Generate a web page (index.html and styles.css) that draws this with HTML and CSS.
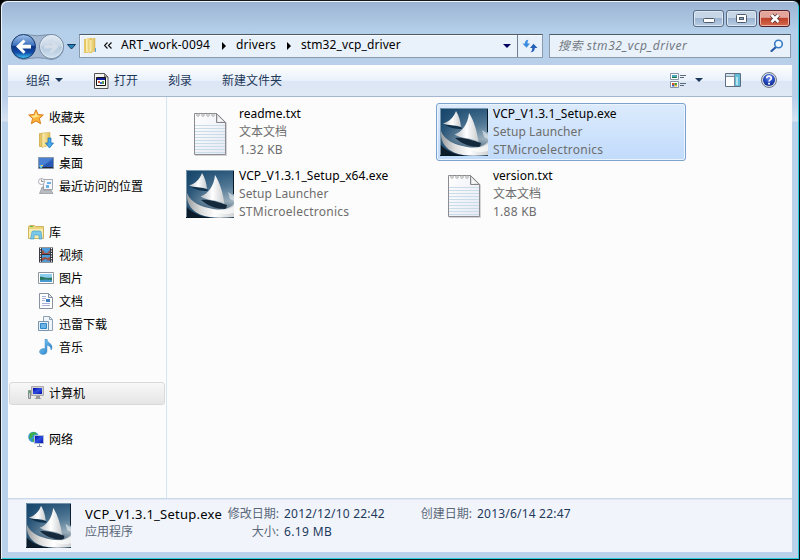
FILE: index.html
```html
<!DOCTYPE html>
<html lang="zh-CN">
<head>
<meta charset="utf-8">
<title>stm32_vcp_driver</title>
<link rel="stylesheet" href="styles.css">
</head>
<body>
<svg class="defs" width="0" height="0" aria-hidden="true">
  <defs>
    <linearGradient id="sea" x1="0" y1="0" x2="0" y2="1"><stop offset="0" stop-color="#2a577b"/><stop offset=".35" stop-color="#587e9a"/><stop offset=".65" stop-color="#a3b5c1"/><stop offset="1" stop-color="#1a3a54"/></linearGradient>
    <linearGradient id="seaLeft" x1="0" y1="0" x2="1" y2="0"><stop offset="0" stop-color="#0f3f66" stop-opacity=".8"/><stop offset=".5" stop-color="#0f3f66" stop-opacity=".25"/><stop offset="1" stop-color="#0f3f66" stop-opacity="0"/></linearGradient>
    <linearGradient id="sail" x1="0" y1="0" x2="1" y2="0"><stop offset="0" stop-color="#b4bcc2"/><stop offset=".5" stop-color="#fff"/><stop offset="1" stop-color="#c9cccf"/></linearGradient>
    <linearGradient id="hull" x1="0" y1="0" x2="1" y2="0"><stop offset="0" stop-color="#9a9ea1"/><stop offset=".3" stop-color="#dcdcdc"/><stop offset=".6" stop-color="#fff"/><stop offset="1" stop-color="#cfd1d3"/></linearGradient>
    <linearGradient id="paper" x1="0" y1="0" x2="1" y2="1"><stop offset="0" stop-color="#fff"/><stop offset="1" stop-color="#e6e8f4"/></linearGradient>
    <linearGradient id="folder" x1="0" y1="0" x2="1" y2="0"><stop offset="0" stop-color="#fbf0b4"/><stop offset="1" stop-color="#e2bd55"/></linearGradient>
    <linearGradient id="blue" x1="0" y1="0" x2="1" y2="1"><stop offset="0" stop-color="#8cd4fa"/><stop offset="1" stop-color="#1b76c4"/></linearGradient>
    <linearGradient id="screen" x1="0" y1="0" x2="1" y2="1"><stop offset="0" stop-color="#0008a0"/><stop offset=".5" stop-color="#304ee0"/><stop offset="1" stop-color="#0010b0"/></linearGradient>
    <linearGradient id="back" x1="0" y1="0" x2="0" y2="1"><stop offset="0" stop-color="#a4c4ec"/><stop offset=".45" stop-color="#3c6fbc"/><stop offset=".5" stop-color="#0c3588"/><stop offset=".75" stop-color="#124ba8"/><stop offset="1" stop-color="#43cdf8"/></linearGradient>
    <linearGradient id="fwd" x1="0" y1="0" x2="0" y2="1"><stop offset="0" stop-color="#e2eaf3"/><stop offset=".48" stop-color="#c8d7e6"/><stop offset=".52" stop-color="#b3c8dd"/><stop offset="1" stop-color="#d0e2f1"/></linearGradient>
    <radialGradient id="helpFill" cx=".5" cy=".3" r=".7"><stop offset="0" stop-color="#7190ec"/><stop offset=".6" stop-color="#2146bc"/><stop offset="1" stop-color="#102c86"/></radialGradient>
    <symbol id="ship" viewBox="0 0 48 48">
      <path fill="url(#sea)" d="M0 0h48v48H0z"/>
      <path fill="url(#seaLeft)" d="M0 0h48v48H0z"/>
      <path fill="#0d1c2a" d="M0 36c5 6 13 10 24 12H0z"/>
      <path fill="#14293c" d="M15 30c8-1 16 2 26 5l-1 4c-10 0-18-3-25-9z"/>
      <path fill="#10304a" d="M4 16l17 3 1 2c-7 0-13-1-18-5z"/>
      <path fill="url(#sail)" d="M16 3c3 5 4.500 10 5 16-6-2.500-12-1-18-3.500C9 14 14 9 16 3z"/>
      <path fill="url(#sail)" d="M29 5c5 8 8 18 9.500 29-8-5-16-2.500-24-7.500C22 24 28 16 29 5z"/>
      <path fill="#fff" opacity=".5" d="M42 22l6 4v5l-4-2z"/>
      <path fill="url(#hull)" d="M1 23c3 9 14 14 26 16 9 1.500 16 0 21-5v13c-12 1-25 1.500-34-2.500C6 41 0 34 1 23z"/>
      <path fill="#fff" opacity=".65" d="M27 40c9 1.500 16 0 21-4v7c-8 2-15 1-21-3z"/>
      <path fill="none" stroke="#9fb6c6" opacity=".7" d="M.5 48V.5H48"/>
      <path fill="none" stroke="#071827" d="M47.500 1v23M0 47.500h23"/>
    </symbol>
    <symbol id="txt" viewBox="0 0 48 48">
      <path fill="#777" opacity=".3" d="M9 7h24l8 8v33H9z"/>
      <path fill="url(#paper)" stroke="#8b8b91" d="M8.500 5.500h22l9 9v32h-31z"/>
      <path stroke="#c9dde8" d="M9 17.500h30M9 20.500h30M9 23.500h30M9 26.500h30M9 29.500h30M9 32.500h30M9 35.500h30M9 38.500h30M9 41.500h30M9 44.500h30"/>
      <path fill="#ddd" stroke="#85858a" d="M30.500 5.500v9h9z"/>
      <path fill="#f8f8f8" d="M32 9l5 4-5 1z"/>
      <g fill="#fff" stroke="#999" stroke-width=".8"><circle cx="12" cy="7" r="1.300"/><circle cx="17" cy="7" r="1.300"/><circle cx="22" cy="7" r="1.300"/><circle cx="27" cy="7" r="1.300"/></g>
    </symbol>
  </defs>
</svg>

<div class="window">
  <header class="titlebar">
    <div class="controls">
      <button class="ctl" aria-label="最小化"><svg class="low" width="12" height="6" viewBox="0 0 12 6"><rect x=".5" y=".5" width="11" height="4" rx="1" fill="#fff" stroke="#4d5a6b"/></svg></button>
      <button class="ctl" aria-label="最大化"><svg width="12" height="10" viewBox="0 0 12 10"><rect x=".5" y=".5" width="10" height="8" rx="1" fill="#fff" stroke="#4d5a6b"/><rect x="3.500" y="3.500" width="4" height="2" fill="#8da5bf" stroke="#4d5a6b"/></svg></button>
      <button class="ctl close" aria-label="关闭"><svg width="12" height="11" viewBox="0 0 12 11"><path d="M2.500 2l7 7M9.500 2l-7 7" stroke="#59323a" stroke-width="4.400"/><path d="M2.500 2l7 7M9.500 2l-7 7" stroke="#fff" stroke-width="2.600"/></svg></button>
    </div>
  </header>

  <nav class="navrow">
    <svg class="travel" width="68" height="28" viewBox="0 0 68 28">
      <path d="M14 1.500Q28 4 41 1.500A12.500 12.500 0 0 1 41 26.500Q28 23 14 26.500A12.500 12.500 0 0 1 14 1.500z" fill="#a4b9d1" stroke="#7990ab"/>
      <circle cx="13.500" cy="13.500" r="12" fill="url(#back)" stroke="#173b70"/>
      <path d="M6 13.500l7.500-7 2 2-3.200 3.300H21v3.600h-8.700l3.200 3.300-2 2z" fill="#fff"/>
      <circle cx="41.500" cy="13.500" r="12" fill="url(#fwd)" stroke="#74889f"/>
      <circle cx="41.500" cy="13.500" r="11" fill="none" stroke="#e4edf6" opacity=".8"/>
      <path d="M49 13.500l-7.500-7-2 2 3.200 3.300H34v3.600h8.700l-3.200 3.300 2 2z" fill="#d5dfea" stroke="#c5d2e0" stroke-width=".6"/>
      <path d="M57.500 11.500h8l-4 4.500z" fill="#2386bd" stroke="#14395e"/>
    </svg>
    <div class="address">
      <svg class="folder" width="15" height="17" viewBox="0 0 15 17"><path d="M1 1h4v14H1z" fill="#e6c766"/><path d="M3 0h6v15l-6-1z" fill="url(#folder)"/><path d="M6 2l6-2v13l-6 2z" fill="url(#folder)" stroke="#d2b052" stroke-width=".5"/><path d="M12 10h1v4h-1z" fill="#58a6e0"/></svg>
      <svg class="more" width="8" height="7" viewBox="0 0 8 7"><path d="M3.500.5l-3 3 3 3M7.500.5l-3 3 3 3" fill="none" stroke="#111" stroke-width="1.200"/></svg>
      <span class="crumb c1">ART_work-0094</span>
      <svg class="sep" width="5" height="8" viewBox="0 0 5 8"><path d="M0 0l4 4-4 4z"/></svg>
      <span class="crumb c2">drivers</span>
      <svg class="sep" width="5" height="8" viewBox="0 0 5 8"><path d="M0 0l4 4-4 4z"/></svg>
      <span class="crumb c3">stm32_vcp_driver</span>
      <svg class="drop" width="8" height="4" viewBox="0 0 8 4"><path d="M0 0h8L4 4z" fill="#000060"/></svg>
      <span class="refresh"><svg width="16" height="14" viewBox="0 0 16 14"><path d="M6.500.8C4 .8 3 2 3 4.500H.5l4 4.200 3.500-4.200H5.500c0-1.500.2-2.700 1-3.700z" fill="#3a8be0"/><path d="M8.500 13.200c3 0 4.300-1.500 4.300-4.200h2.700l-4-4.200L8 9h2.300c0 2-.5 3.200-1.800 4.200z" fill="#2460b8"/></svg></span>
    </div>
    <div class="search"><span>搜索 stm32_vcp_driver</span>
      <svg width="14" height="13" viewBox="0 0 14 13"><path d="M6 8l-4.500 4" stroke="#285aa5" stroke-width="2.200" stroke-linecap="round"/><circle cx="8.500" cy="5" r="3.800" fill="#eff8ff" stroke="#397bc5" stroke-width="1.600"/></svg>
    </div>
  </nav>

  <main class="client">
    <div class="toolbar">
      <span class="tool t1">组织</span>
      <svg class="tri1" width="8" height="4" viewBox="0 0 8 4"><path d="M0 0h8L4 4z" fill="#1e395b"/></svg>
      <svg class="open" width="15" height="16" viewBox="0 0 15 16"><path d="M.5.500h10l3.500 3.500v11.500H.5z" fill="#f4f4ee" stroke="#555"/><path d="M10.500.5V4H14z" fill="#aaa" stroke="#555" stroke-width=".7"/><path d="M2.500 4.500h9v8h-9z" fill="#fff" stroke="#111"/><path d="M3 5h8v2H3z" fill="#1020a0"/><path d="M4 8h2v2H4z" fill="#c25148"/><path d="M6 9h2v2H6z" fill="#376bd0"/><path d="M8 8h2v3H8z" fill="#5e9b4e"/></svg>
      <span class="tool t2">打开</span>
      <span class="tool t3">刻录</span>
      <span class="tool t4">新建文件夹</span>
      <div class="views">
        <svg width="17" height="16" viewBox="0 0 17 16"><path d="M.5.500h8v6h-8zM.5 8.500h8v6h-8z" fill="#fff" stroke="#8795a6"/><path d="M2 2h5v3H2z" fill="#4ca4b6"/><path d="M2 4h5v1H2z" fill="#187a4b"/><path d="M2 10h2.500v2H2z" fill="#d84b33"/><path d="M4.500 10H7v2H4.500z" fill="#4a9f36"/><path d="M2 12h2.500v1.500H2z" fill="#3a63c8"/><path d="M4.500 12H7v1.500H4.500z" fill="#e7b72c"/><path d="M10 2.500h6M10 4.500h4M10 10.500h6M10 12.500h4" stroke="#5a6878"/></svg>
        <svg width="8" height="4" viewBox="0 0 8 4"><path d="M0 0h8L4 4z" fill="#1e395b"/></svg>
        <svg width="16" height="14" viewBox="0 0 16 14"><path d="M.5.500h15v13H.5z" fill="#fff" stroke="#5f6f83"/><path d="M1 1h14v2H1z" fill="#d7e0e9"/><path d="M10 1h5v12h-5z" fill="#64bdd8"/><path d="M11 4h2v8h-2z" fill="#b7e4f0"/><path d="M9.500 1v12M1 3.500h9" stroke="#7c8b9c"/></svg>
        <svg width="16" height="16" viewBox="0 0 16 16"><circle cx="8" cy="8" r="7.500" fill="#d9dde5" stroke="#6f7a8c"/><circle cx="8" cy="8" r="6" fill="url(#helpFill)"/><path d="M5.700 6.300C5.800 3.300 10.400 3.400 10.300 6.200 10.300 7.900 8 7.900 8 9.600" fill="none" stroke="#fff" stroke-width="1.700"/><path d="M7.100 10.700h1.900v1.800H7.100z" fill="#fff"/></svg>
      </div>
    </div>

    <div class="content">
      <aside class="tree">
        <div class="group">
          <div class="node"><svg viewBox="0 0 16 16"><path d="M8 .8l2.100 4.700 5.200.5-3.900 3.500 1.200 5.200L8 12l-4.600 2.700 1.200-5.200L.7 6l5.200-.5z" fill="#fbb338" stroke="#db7d20"/><path d="M8 3l1.200 3.500 3.200.4-6.800 2L3 7l3.600-.5z" fill="#ffe58c"/></svg>收藏夹</div>
          <div class="node sub"><svg viewBox="0 0 16 16"><path d="M1.500 1.500H6v13H1.500z" fill="#e5c566" stroke="#d4b458"/><path d="M4 1l8-.5V13l-8 2.500z" fill="url(#folder)" stroke="#d2b052" stroke-width=".6"/><path d="M10 6h3v5h2.500L11.500 16l-4-5H10z" fill="#45a8e8" stroke="#1769af" stroke-width=".7"/></svg>下载</div>
          <div class="node sub"><svg viewBox="0 0 16 16"><path d="M.5 2.500h15v11H.5z" fill="#3a66bd" stroke="#8997a7"/><path d="M1 3h14L5 11H1z" fill="#4a80d4"/><path d="M5 11L15 5v7H5z" fill="#2858b5"/><path d="M1 12h14v1H1z" fill="#252a33"/><circle cx="3" cy="11.500" r="1.500" fill="#70cfed"/><path d="M3 10h2v1H3z" fill="#f3d34d"/></svg>桌面</div>
          <div class="node sub"><svg viewBox="0 0 16 16"><path d="M5.500 1.500h9v10h-9z" fill="#f5f7fa" stroke="#a2a9b0"/><path d="M9 4h4v2H9zM8 7h3v3H8z" fill="#69b1e9"/><path d="M3 12l1-3h1.500v3H13l2 3.500H1.500z" fill="#b8bbc0" stroke="#8f9399" stroke-width=".7"/><circle cx="3.500" cy="3.500" r="3" fill="#fff" stroke="#a5abb2"/><path d="M3.500 1.500v2h2" fill="none" stroke="#888"/></svg>最近访问的位置</div>
        </div>
        <div class="group">
          <div class="node"><svg viewBox="0 0 16 16"><path d="M.5 2.500l1-1h5l1 1h8v12H.5z" fill="#ecd37d" stroke="#ceb45f"/><path d="M1 5h14v9H1z" fill="#f9edb0"/><path d="M2 2h3v1H2z" fill="#54bc4a"/><path d="M4 8q0-1 1-1h7q1 0 1 1l1 7h-3v-4H6v4H2.500z" fill="#7cc8ea" stroke="#4a9fcb" stroke-width=".7"/></svg>库</div>
          <div class="node sub"><svg viewBox="0 0 16 16"><path d="M1 .5h14v15H1z" fill="#303238"/><path d="M4 1h8v6H4zM4 8h8v7H4z" fill="#4c9bdc"/><path d="M4 3l2 1 1 2h2l3-3v3l-2 1H4zM4 11l3-1 2 1 3-1v3l-2 1-2-2-4 2z" fill="#9a5247"/><path d="M2.500 1v14M13.500 1v14" stroke="#fff" stroke-width="1.200" stroke-dasharray="1.300 1.200"/></svg>视频</div>
          <div class="node sub"><svg viewBox="0 0 16 16"><path d="M.5 2.500h15v11H.5z" fill="#fff" stroke="#8d969f"/><path d="M2 4h12v8H2z" fill="#8dcdf0"/><path d="M2 6.500c3 .5 7 2 12 1V12H2z" fill="#2a7760"/><path d="M2 10q6-1 12 0v2H2z" fill="#479ad0"/></svg>图片</div>
          <div class="node sub"><svg viewBox="0 0 16 16"><path d="M1.500.500h9l4 4v11h-13z" fill="#fff" stroke="#88939f"/><path d="M10.500.5v4h4z" fill="#dfe6ef" stroke="#88939f"/><path d="M4 3.500h4M4 5.500h4M4 7.500h3M4 10.500h8M4 12.500h8" stroke="#a9afd6"/><path d="M8 6h4v3H8z" fill="#387ec1"/></svg>文档</div>
          <div class="node sub"><svg viewBox="0 0 16 16"><path d="M5.500.500h6l3 3v11h-9z" fill="#eff5fa" stroke="#8ea1b3"/><path d="M11.500.5v3h3" fill="none" stroke="#8ea1b3"/><path d="M.5 5.500h10v9H.5z" fill="#e4f0fa" stroke="#7895ac"/><path d="M2.500 7.500h6v5h-6z" fill="#69b3e7" stroke="#3386c5"/></svg>迅雷下载</div>
          <div class="node sub"><svg viewBox="0 0 16 16"><path d="M7 0h2c0 4 5 4 5 8q0 2-1 3c0-3-1.500-4-4-5v6c0 5-8 4-7.500.5C2 10 5 9 7 10z" fill="url(#blue)" stroke="#237ab9" stroke-width=".4"/></svg>音乐</div>
        </div>
        <div class="group single">
          <div class="node selected"><svg viewBox="0 0 16 16"><path d="M.5 5.500h2v8h-2z" fill="#c5cbca" stroke="#868d8c"/><path d="M1 6h1v2H1z" fill="#36bd42"/><path d="M3.500 1.500h12v9h-12z" fill="#d2d2d2" stroke="#aaa"/><path d="M5 3h9v6H5z" fill="url(#screen)"/><path d="M8 11h4v2l2 1H6l2-1z" fill="#999"/></svg>计算机</div>
        </div>
        <div class="group single">
          <div class="node"><svg viewBox="0 0 16 16"><circle cx="5.500" cy="6" r="5.300" fill="#3297d9"/><path d="M2 2l5-1 2 2-4 1-1 3-3 1zM4 8l4 0-1 3-2 0z" fill="#41ae48"/><path d="M6.500 4.500h9v8h-9z" fill="url(#screen)" stroke="#b1bfd4"/><path d="M9 15.500h5M11.500 13v2" stroke="#8392a9"/></svg>网络</div>
        </div>
      </aside>

      <section class="files">
        <article class="tile"><svg class="big"><use href="#txt"/></svg><div class="meta"><b>readme.txt</b><span>文本文档</span><span class="size">1.32 KB</span></div></article>
        <article class="tile active"><svg class="big"><use href="#ship"/></svg><div class="meta"><b class="exe">VCP_V1.3.1_Setup.exe</b><span class="desc">Setup Launcher</span><span class="corp">STMicroelectronics</span></div></article>
        <article class="tile"><svg class="big"><use href="#ship"/></svg><div class="meta"><b class="exe">VCP_V1.3.1_Setup_x64.exe</b><span class="desc">Setup Launcher</span><span class="corp">STMicroelectronics</span></div></article>
        <article class="tile"><svg class="big"><use href="#txt"/></svg><div class="meta"><b>version.txt</b><span>文本文档</span><span class="size">1.88 KB</span></div></article>
      </section>
    </div>

    <footer class="details">
      <svg class="thumb"><use href="#ship"/></svg>
      <div class="dcol name"><span class="fname">VCP_V1.3.1_Setup.exe</span><span class="label">应用程序</span></div>
      <div class="dcol labels"><span>修改日期:</span><span>大小:</span></div>
      <div class="dcol values"><span class="date">2012/12/10 22:42</span><span class="mb">6.19 MB</span></div>
      <div class="dcol labels created"><span>创建日期:</span></div>
      <div class="dcol values"><span class="date">2013/6/14 22:47</span></div>
    </footer>
  </main>
</div>
</body>
</html>
```
FILE: styles.css
```css
* { box-sizing: border-box; }

body {
  margin: 0;
  width: 800px;
  height: 560px;
  overflow: hidden;
  background: #000;
  font: 12px/18px "Noto Sans", "Noto Sans CJK SC", sans-serif;
  color: #000;
}

svg { display: block; flex: none; }
.defs { position: absolute; }
span, b { white-space: nowrap; }

.window {
  width: 800px;
  height: 560px;
  padding: 0 6px 0 7px;
  border: 1px solid #17181c;
  border-right-color: #101418;
  border-radius: 7px 7px 0 0;
  background: linear-gradient(#9ab3d2 0, #b5d0ea 31px, #b9cfea 64px, #b9cfea 96px, #d6e2f2 120px, #b9d1ea 121px, #b9d1ea 100%);
  box-shadow: inset 1px 1px 0 #edf5fc, inset -1px -1px 0 #28cde0;
}

.titlebar { height: 32px; display: flex; justify-content: flex-end; padding: 9px 2px 0 0; margin-right: 1px; }
.controls { display: flex; gap: 2px; }
.ctl {
  width: 31px;
  height: 17px;
  display: grid;
  place-items: center;
  padding: 0;
  border: 1px solid #596b82;
  border-radius: 3px;
  background: linear-gradient(#c6d6e7 0 45%, #9ab2cf 46%, #b8cee6);
  box-shadow: inset 0 0 0 1px #dce8f4;
}
.ctl .low { margin-top: 4px; }
.ctl.close { border-color: #521e2a; background: linear-gradient(#e3a59b 0 43%, #bc3e28 45%, #d56b4e); box-shadow: inset 0 0 0 1px #edb5a8; }

.navrow { height: 32px; display: flex; align-items: flex-start; }
.travel { margin: 0 3px 0 2px; }
.address {
  width: 464px;
  height: 24px;
  margin-top: 1px;
  margin-left: -2px;
  display: flex;
  align-items: center;
  border: 1px solid #8c9bac;
  border-top-color: #4e5a66;
  background: #e9f1fa;
  box-shadow: inset 1px 1px 0 #f7fbff;
}
.folder { margin: 0 6px 0 3px; }
.more { margin: 0 9px 2px 0; }
.crumb { flex: none; line-height: 20px; padding-bottom: 2px; }
.c1 { width: 91px; letter-spacing: .2px; }
.c2 { width: 41px; letter-spacing: .12px; }
.c3 { width: 100px; letter-spacing: .1px; }
.sep { margin: 0 9px 1px 10px; }
.drop { margin-left: auto; margin-right: 6px; }
.refresh { align-self: stretch; width: 25px; border-left: 1px solid #6e7f91; display: grid; place-items: center; }
.search {
  width: 242px;
  height: 24px;
  margin: 1px 0 0 6px;
  padding: 0 6px 0 8px;
  display: flex;
  align-items: center;
  justify-content: space-between;
  border: 1px solid #8c9bac;
  border-top-color: #4e5a66;
  background: #e9f1fa;
  color: #737a82;
  font-style: italic;
}
.search span { letter-spacing: .56px; }
.search svg { margin-bottom: 1px; }

.client { width: 784px; height: 487px; display: flex; flex-direction: column; background: #fcfcfc; }
.toolbar {
  height: 32px;
  flex: none;
  display: flex;
  align-items: center;
  padding: 0 15px 0 18px;
  border-top: 1px solid #fff;
  border-bottom: 1px solid #a5b6cf;
  background: linear-gradient(#fcfeff, #eaf1fb 48%, #dce6f4 50%, #dfe8f5);
  color: #1e395b;
}
.tri1 { margin: 0 31px 2px 5px; }
.open { margin: 0 4px 1px 0; }
.t1, .t2, .t3 { width: 24px; }
.t2 { margin-left: 1px; }
.t3 { margin: 0 30px; }
.views { margin-left: auto; display: flex; align-items: center; }
.views svg:nth-child(2) { margin: 0 22px 2px 8px; }
.views svg:nth-child(3) { margin-bottom: 2px; }
.views svg:nth-child(4) { margin-left: 20px; margin-bottom: 2px; }

.content { flex: 1; min-height: 0; display: flex; }
.tree { width: 159px; flex: none; padding: 9px 1px 0; border-right: 1px solid #d6e5f5; }
.group { margin-bottom: 23px; }
.node { height: 23px; display: flex; align-items: center; padding-left: 19px; border: 1px solid transparent; border-left: 0; border-right: 0; }
.node svg { width: 16px; height: 16px; margin: 0 5px 1px 0; }
.node.sub { padding-left: 29px; }
.node.selected { padding-left: 18px; border: 1px solid #d9d9d9; border-radius: 3px; background: linear-gradient(#f8f8f8, #e5e5e5); }

.files { display: grid; grid-template-columns: 250px 250px; grid-auto-rows: 58px; gap: 4px; align-content: start; padding: 6px 0 0 15px; }
.tile { display: flex; align-items: flex-start; padding: 1px 3px; border: 1px solid transparent; border-radius: 3px; }
.tile.active { border-color: #7da2ce; background: linear-gradient(#dcebfc, #c1dbfc); box-shadow: inset 0 0 0 1px #ebf4fd; }
.big { width: 48px; height: 48px; margin: 3px 5px 0 0; }
.meta { display: flex; flex-direction: column; color: #6d6d6d; }
.meta b { font-weight: 400; color: #000; }
.meta .exe { letter-spacing: .09px; }
.desc { letter-spacing: .08px; }
.corp { letter-spacing: .26px; }
.size { letter-spacing: .25px; }

.details { height: 54px; flex: none; display: flex; padding: 4px 0 0 18px; border-top: 1px solid #ccd9ea; background: #f1f5fb; box-shadow: inset 0 1px 0 #dfe8f3; }
.thumb { width: 45px; height: 45px; margin-right: 14px; }
.dcol { display: flex; flex-direction: column; padding-top: 2px; color: #1e395b; }
.name { width: 143px; color: #000; }
.fname { font-size: 13px; letter-spacing: .25px; }
.label, .labels { color: #5a6779; }
.labels { width: 51px; align-items: flex-end; margin-right: 5px; }
.labels.created { margin-left: 35px; }
.values { width: 102px; }
.date { letter-spacing: .2px; }
.mb { letter-spacing: .35px; }
```
